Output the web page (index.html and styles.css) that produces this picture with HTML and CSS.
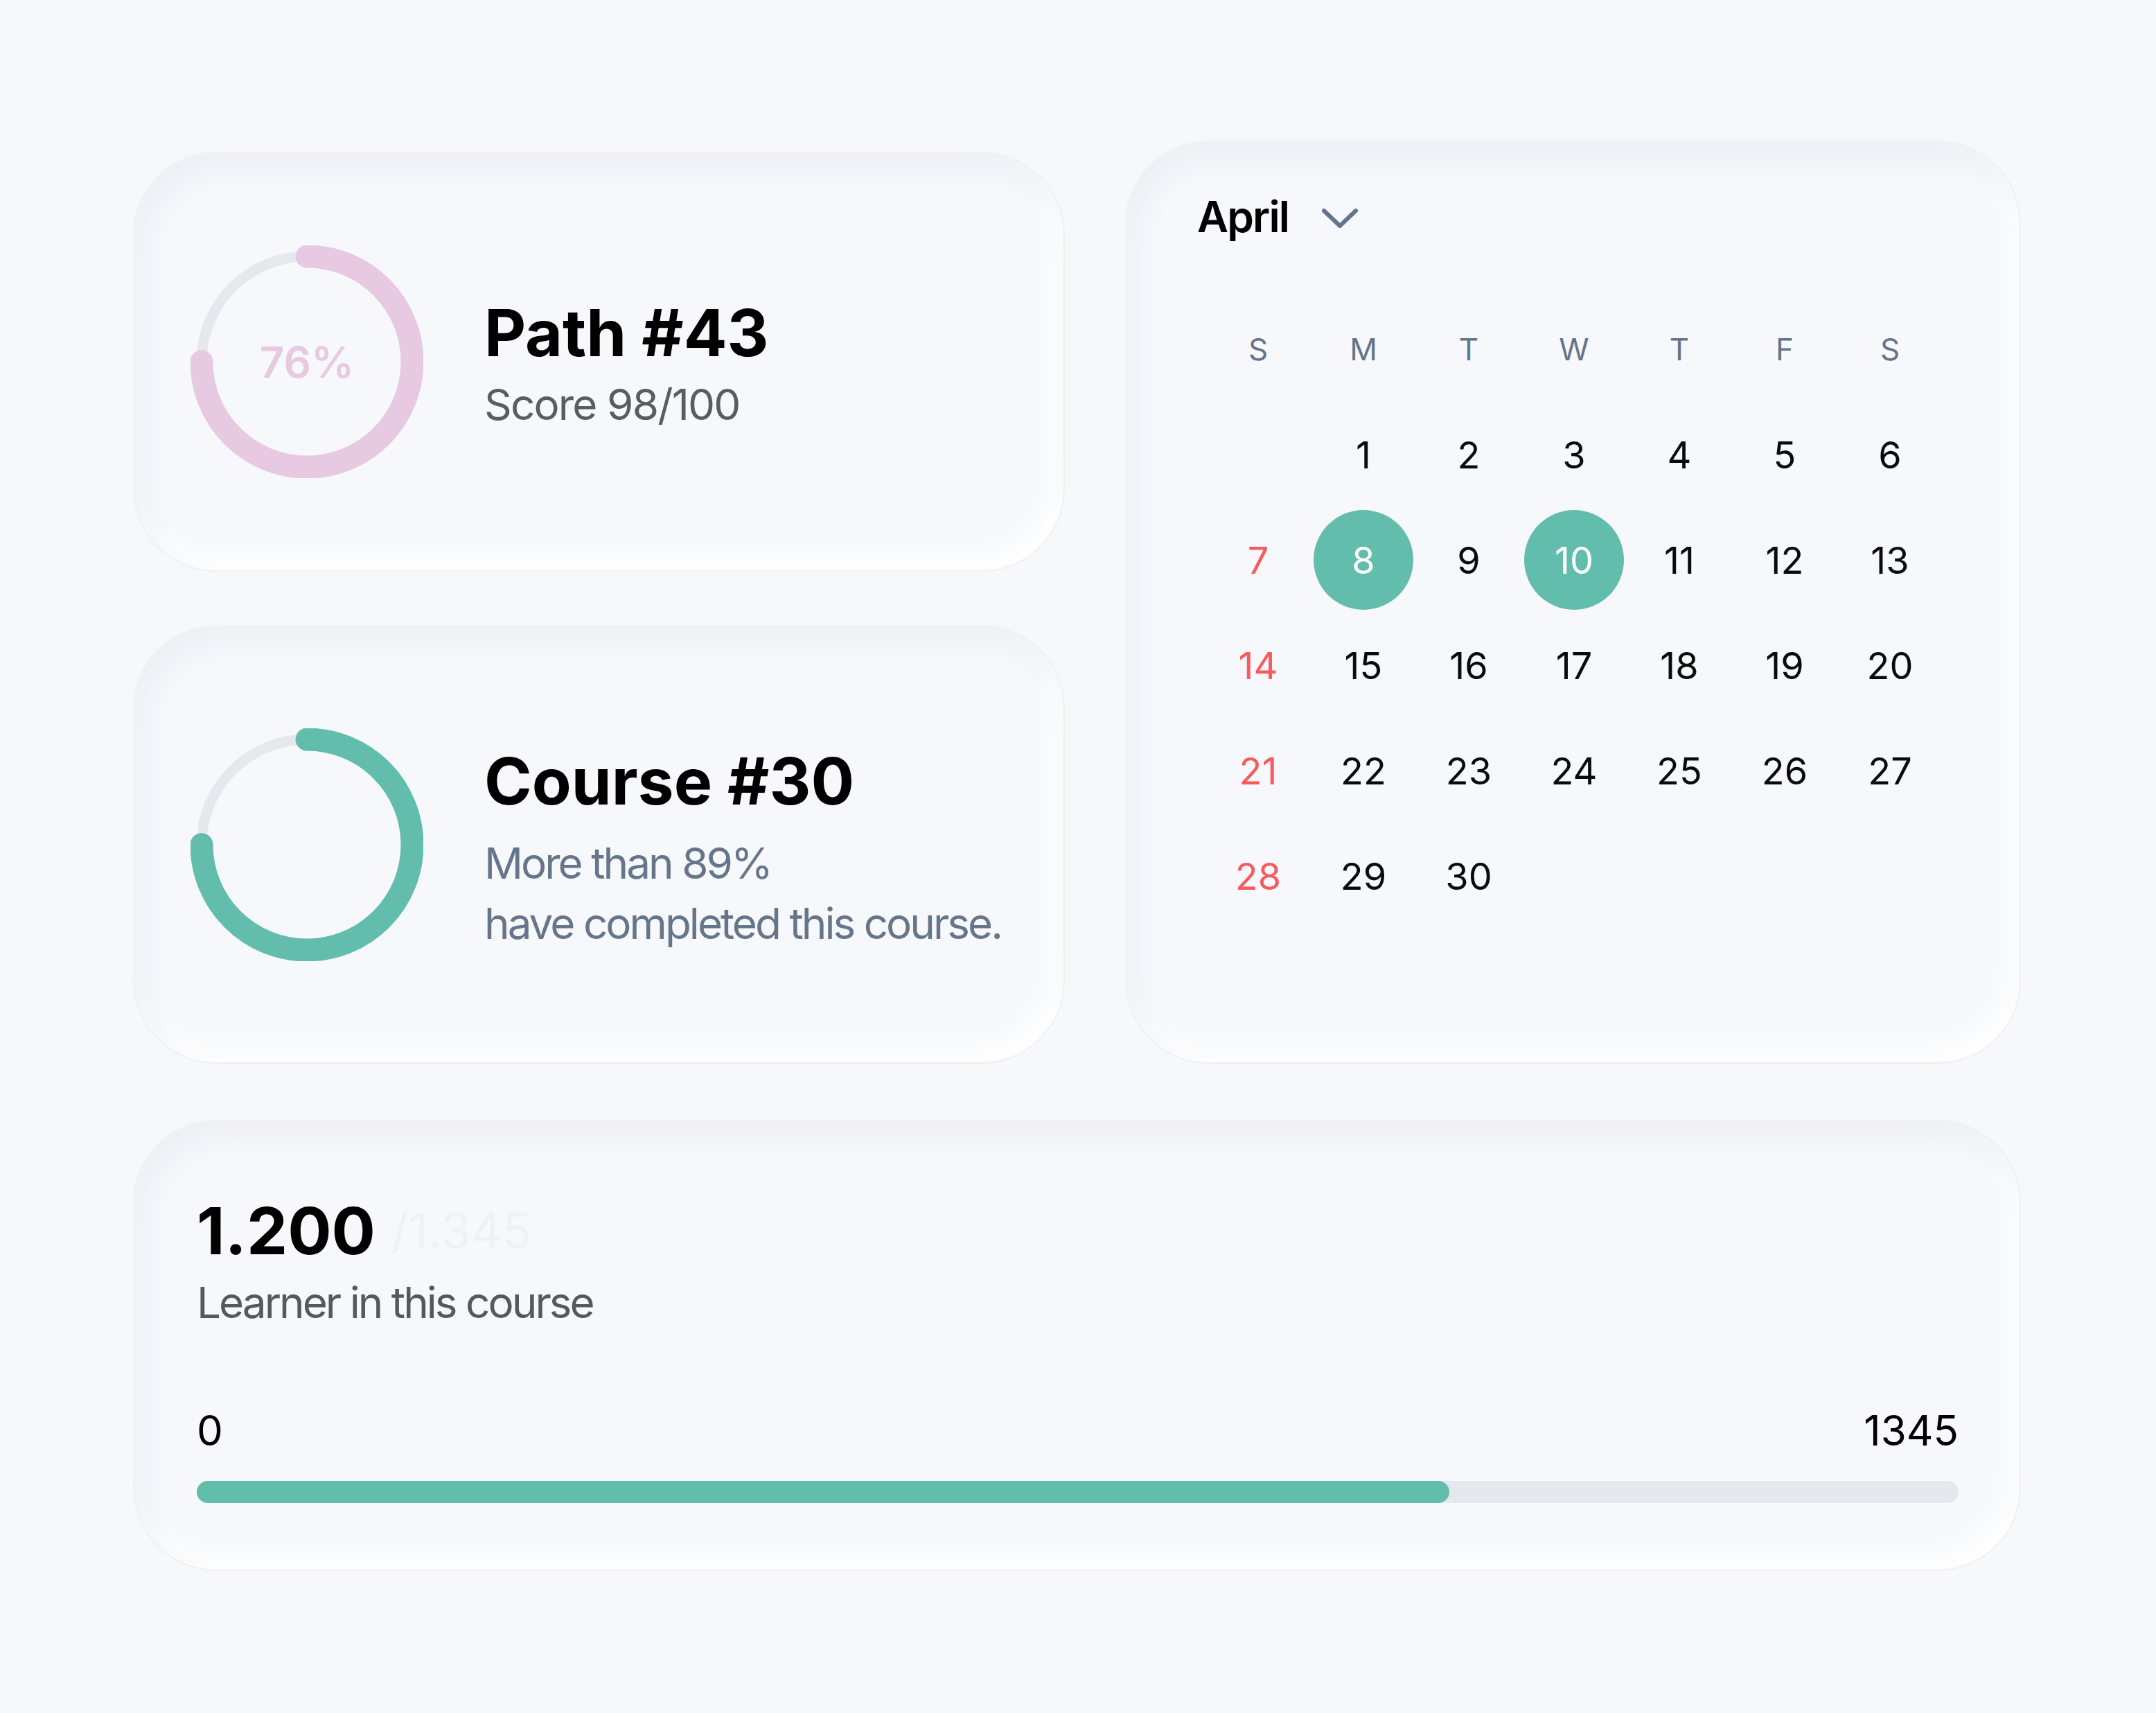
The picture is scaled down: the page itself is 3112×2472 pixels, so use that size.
FILE: index.html
```html
<!DOCTYPE html>
<html lang="en">

<head>
	<meta charset="UTF-8">
	<meta name="viewport" content="width=device-width, initial-scale=1.0">
	<title>Learning Dashboard</title>
	<link rel="stylesheet" href="styles.css">
</head>

<body>
	<main class="dashboard">
		<div class="top">
			<div class="stack">
				<!-- path progress -->
				<section class="card stat path-card">
					<div class="ring">
						<svg viewBox="0 0 336 336">
							<circle class="track" cx="168" cy="168" r="152" />
							<circle class="arc pink" cx="168" cy="168" r="152" stroke-dasharray="716.3 955" transform="rotate(-90 168 168)" />
						</svg>
						<span class="ring-label">76%</span>
					</div>
					<div class="info">
						<h2 class="title">Path #43</h2>
						<p class="score">Score 98/100</p>
					</div>
				</section>

				<!-- course progress -->
				<section class="card stat course-card">
					<div class="ring">
						<svg viewBox="0 0 336 336">
							<circle class="track" cx="168" cy="168" r="152" />
							<circle class="arc teal" cx="168" cy="168" r="152" stroke-dasharray="716.3 955" transform="rotate(-90 168 168)" />
						</svg>
					</div>
					<div class="info">
						<h2 class="title">Course #30</h2>
						<p class="desc">More than 89%<br>have completed this course.</p>
					</div>
				</section>
			</div>

			<!-- calendar -->
			<section class="card calendar">
				<div class="month">
					<span>April</span>
					<svg class="chevron" viewBox="0 0 52 28">
						<path d="M3 3 L26 25 L49 3" />
					</svg>
				</div>
				<div class="days">
					<div class="wd">S</div>
					<div class="wd">M</div>
					<div class="wd">T</div>
					<div class="wd">W</div>
					<div class="wd">T</div>
					<div class="wd">F</div>
					<div class="wd">S</div>

					<div class="day"></div>
					<div class="day">1</div>
					<div class="day">2</div>
					<div class="day">3</div>
					<div class="day">4</div>
					<div class="day">5</div>
					<div class="day">6</div>

					<div class="day sun">7</div>
					<div class="day"><span class="picked">8</span></div>
					<div class="day">9</div>
					<div class="day"><span class="picked">10</span></div>
					<div class="day">11</div>
					<div class="day">12</div>
					<div class="day">13</div>

					<div class="day sun">14</div>
					<div class="day">15</div>
					<div class="day">16</div>
					<div class="day">17</div>
					<div class="day">18</div>
					<div class="day">19</div>
					<div class="day">20</div>

					<div class="day sun">21</div>
					<div class="day">22</div>
					<div class="day">23</div>
					<div class="day">24</div>
					<div class="day">25</div>
					<div class="day">26</div>
					<div class="day">27</div>

					<div class="day sun">28</div>
					<div class="day">29</div>
					<div class="day">30</div>
				</div>
			</section>
		</div>

		<!-- learners -->
		<section class="card learners">
			<div class="count">1.200 <span class="total">/1.345</span></div>
			<p class="caption">Learner in this course</p>
			<div class="scale">
				<span>0</span>
				<span>1345</span>
			</div>
			<div class="bar">
				<div class="fill" style="width: 71.1%"></div>
			</div>
		</section>
	</main>
</body>

</html>
```

FILE: styles.css
```css
body {
	margin: 0;
	background: #f7f8fc;
	font-family: Inter, "Noto Sans", sans-serif;
	color: #0a0a0a;
}

.dashboard {
	padding: 203px 195px 0 192px;
}

.top {
	display: grid;
	grid-template-columns: 1345px 1293px;
	column-gap: 87px;
}

.stack {
	display: flex;
	flex-direction: column;
	gap: 77px;
	padding-top: 16px;
}

/* soft pressed-in card */
.card {
	box-sizing: border-box;
	background: #f7f8fc;
	border: 2px solid #f0f0ee;
	border-radius: 120px;
	box-shadow:
		inset 14px 22px 40px rgba(40, 50, 90, 0.045),
		inset -14px -22px 40px rgba(255, 255, 255, 0.95);
}

.stat {
	display: flex;
	align-items: center;
	padding-left: 81px;
	gap: 88px;
}

.path-card {
	height: 606px;
}

.course-card {
	height: 633px;
}

.ring {
	display: grid;
	place-items: center;
	width: 336px;
	height: 336px;
}

.ring svg,
.ring-label {
	grid-area: 1 / 1;
}

.ring svg {
	width: 336px;
	height: 336px;
}

.track {
	fill: none;
	stroke: #e5e8ec;
	stroke-width: 15;
}

.arc {
	fill: none;
	stroke-width: 33;
	stroke-linecap: round;
}

.arc.pink {
	stroke: #e7cae1;
}

.arc.teal {
	stroke: #63bdad;
}

.ring-label {
	font-size: 62px;
	font-weight: 600;
	color: #e7cae1;
}

.info {
	padding-top: 10px;
}

.course-card .info {
	padding-top: 16px;
}

.title {
	margin: 0;
	font-size: 93px;
	line-height: 100px;
	font-weight: 700;
	color: #000;
}

.score {
	margin: 14px 0 0;
	font-size: 62px;
	line-height: 80px;
	letter-spacing: -0.03em;
	color: #595d62;
}

.desc {
	margin: 25px 0 0;
	font-size: 62px;
	line-height: 87px;
	letter-spacing: -0.048em;
	color: #66768a;
}

/* calendar */
.calendar {
	height: 1332px;
	padding: 68px 0 0 102px;
}

.month {
	display: flex;
	align-items: center;
	gap: 48px;
	font-size: 62px;
	line-height: 80px;
	font-weight: 600;
	letter-spacing: -0.03em;
	color: #000;
}

.chevron {
	width: 52px;
	height: 28px;
	margin-top: 4px;
}

.chevron path {
	fill: none;
	stroke: #64748b;
	stroke-width: 6;
	stroke-linecap: round;
	stroke-linejoin: round;
}

.days {
	display: grid;
	grid-template-columns: repeat(7, 152px);
	grid-auto-rows: 152px;
	margin: 75px 0 0 12px;
}

.wd,
.day {
	display: flex;
	align-items: center;
	justify-content: center;
}

.wd {
	font-size: 44px;
	color: #64748b;
}

.day {
	font-size: 54px;
	color: #0a0a0a;
}

.day.sun {
	color: #f75b5d;
}

.picked {
	display: flex;
	align-items: center;
	justify-content: center;
	width: 144px;
	height: 144px;
	border-radius: 50%;
	background: #63bdad;
	color: #fff;
}

/* learners */
.learners {
	margin-top: 81px;
	height: 651px;
	padding: 108px 88px 0 90px;
}

.count {
	font-size: 94px;
	line-height: 100px;
	font-weight: 700;
	color: #000;
}

.total {
	font-size: 70px;
	font-weight: 400;
	color: #eef1f5;
	vertical-align: 9px;
}

.caption {
	margin: 14px 0 0;
	font-size: 62px;
	line-height: 80px;
	letter-spacing: -0.048em;
	color: #55595e;
}

.scale {
	display: flex;
	justify-content: space-between;
	margin-top: 106px;
	font-size: 60px;
	line-height: 76px;
	color: #000;
}

.bar {
	margin-top: 35px;
	height: 32px;
	border-radius: 16px;
	background: #e5e8ec;
}

.fill {
	height: 100%;
	border-radius: 16px;
	background: #63bdad;
}
```
